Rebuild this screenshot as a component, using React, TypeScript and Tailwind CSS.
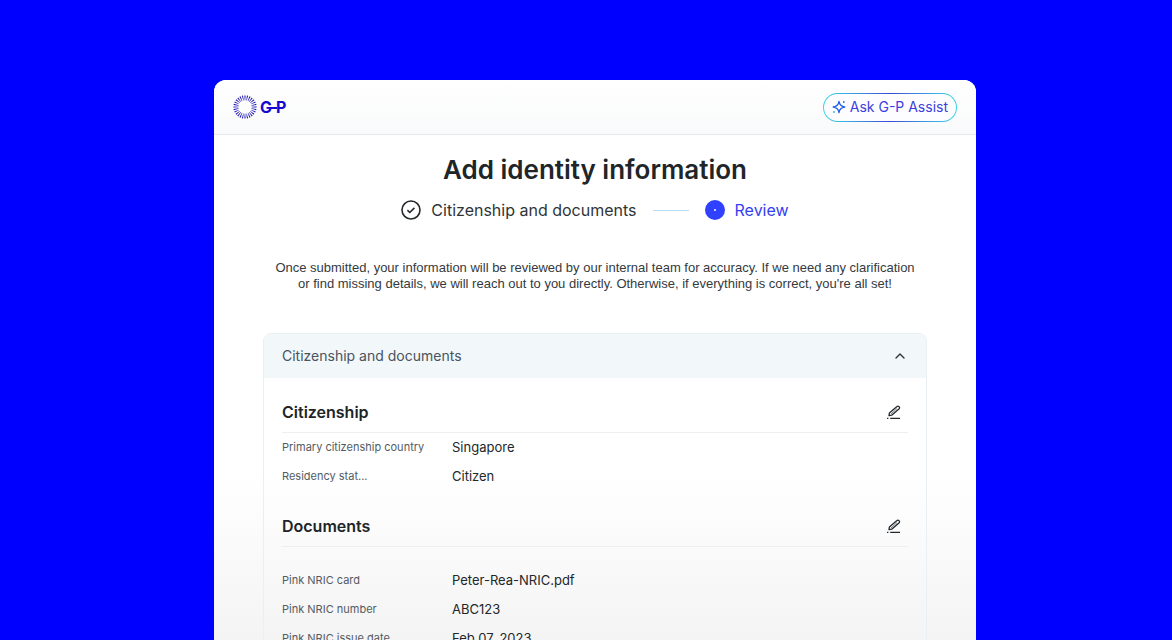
import { useState } from 'react';
import { ChevronUp } from 'lucide-react';

type Field = { label: string; value: string };

const citizenship: Field[] = [
  { label: 'Primary citizenship country', value: 'Singapore' },
  { label: 'Residency stat...', value: 'Citizen' },
];

const documents: Field[] = [
  { label: 'Pink NRIC card', value: 'Peter-Rea-NRIC.pdf' },
  { label: 'Pink NRIC number', value: 'ABC123' },
  { label: 'Pink NRIC issue date', value: 'Feb 07, 2023' },
];

function Logo() {
  return (
    <svg width="54" height="24" viewBox="0 0 54 24" role="img" aria-label="G-P">
      {Array.from({ length: 28 }).map((_, i) => (
        <path
          key={i}
          d="M11.4 .4h1.2l-.4 5h-.4Z"
          fill="#1d12b8"
          transform={`rotate(${i * (360 / 28)} 12 12)`}
        />
      ))}
      <g fill="#1409d0" fontSize="16" fontWeight="700" className="font-['Inter',sans-serif]">
        <text x="27" y="18">
          G
        </text>
        <text x="43" y="18">
          P
        </text>
      </g>
      <path d="M38 13h6" stroke="#1409d0" strokeWidth="2" />
    </svg>
  );
}

function SparkleIcon() {
  return (
    <svg width="14" height="14" viewBox="0 0 14 14" fill="none" aria-hidden="true">
      <path
        d="M7 1.4C7.5 4.9 9.1 6.5 12.8 7 9.1 7.5 7.5 9.1 7 12.6 6.5 9.1 4.9 7.5 1.2 7 4.9 6.5 6.5 4.9 7 1.4Z"
        stroke="#2563eb"
        strokeWidth="1.3"
        strokeLinejoin="round"
      />
      <circle cx="11.8" cy="2" r=".9" fill="#3b5bf0" />
      <circle cx="2" cy="12" r=".9" fill="#22b8e0" />
    </svg>
  );
}

function EditIcon() {
  return (
    <svg
      width="16"
      height="16"
      viewBox="0 0 16 16"
      fill="none"
      stroke="#22282c"
      strokeWidth="1.3"
      strokeLinejoin="round"
      aria-hidden="true"
    >
      <path d="M3 11.6l.4-2.6 7.6-6.5a1.3 1.3 0 0 1 1.8 0l.4.4a1.3 1.3 0 0 1 0 1.8l-7.5 6.5Z" />
      <path d="M5 10l6-5.4" strokeWidth=".6" />
      <path d="M1 14.4h1.4M4.2 14.4h9.8" />
    </svg>
  );
}

function Section({ title, fields, listClass }: { title: string; fields: Field[]; listClass: string }) {
  return (
    <section>
      <div className="flex h-10 items-center justify-between border-b border-[#eceff1] pb-0.5">
        <h2 className="text-base font-semibold text-[#202427]">{title}</h2>
        <button type="button" aria-label={`Edit ${title.toLowerCase()}`} className="mr-1.5">
          <EditIcon />
        </button>
      </div>
      <dl className={listClass}>
        {fields.map((f) => (
          <div key={f.label} className="grid h-[29px] grid-cols-[170px_1fr] items-center">
            <dt className="text-[11px] text-[#535b62]">{f.label}</dt>
            <dd className="text-[13px] text-[#22272a]">{f.value}</dd>
          </div>
        ))}
      </dl>
    </section>
  );
}

export default function App() {
  const [open, setOpen] = useState(true);

  return (
    <div className="h-screen overflow-hidden bg-[#0000ff] pt-20 pl-[18px] font-['Inter','Liberation_Sans',sans-serif]">
      <div className="mx-auto h-full max-w-[762px] overflow-hidden rounded-t-xl bg-linear-to-b from-white from-70% to-[#f4f4f5]">
        <header className="flex h-[55px] items-center justify-between border-b border-[#e6e8ea] bg-linear-to-b from-white to-[#f9fafb] px-[19px]">
          <Logo />
          <button
            type="button"
            className="rounded-full bg-linear-to-r from-[#3fd8e4] via-[#3f45d8] to-[#3fd8e4] p-px"
          >
            <span className="flex h-[27px] items-center gap-1 rounded-full bg-[#fdfdff] px-2 text-sm text-[#3c3fdc]">
              <SparkleIcon />
              Ask G-P Assist
            </span>
          </button>
        </header>

        <main className="px-[49px] pt-[17px]">
          <h1 className="text-center text-[26px] leading-9 font-semibold text-[#202529]">
            Add identity information
          </h1>

          <ol className="mt-[10px] flex items-center justify-center text-base leading-6">
            <li className="flex items-center gap-2.5 text-[#2f3437]">
              <svg width="20" height="20" viewBox="0 0 20 20" fill="none" stroke="#22272a" aria-hidden="true">
                <circle cx="10" cy="10" r="9" strokeWidth="1.6" />
                <path d="M6.4 10.2l2.4 2.3 4.6-4.6" strokeWidth="1.6" />
              </svg>
              Citizenship and documents
            </li>
            <li aria-hidden="true" className="mx-4 h-px w-9 bg-[#b9dcf5]" />
            <li aria-current="step" className="flex items-center gap-2.5 text-[#343ff0]">
              <span className="flex size-5 items-center justify-center rounded-full bg-[#3040ff]">
                <span className="size-0.5 rounded-full bg-white" />
              </span>
              Review
            </li>
          </ol>

          <p className="mt-[38px] text-center font-['Liberation_Sans',sans-serif] text-[13px] leading-4 text-[#343a3e]">
            Once submitted, your information will be reviewed by our internal team for accuracy. If we need any
            clarification <br className="hidden md:inline" />
            or find missing details, we will reach out to you directly. Otherwise, if everything is correct, you're
            all set!
          </p>

          <div className="mt-[41px] rounded-t-lg border border-[#e9eff2]">
            <button
              type="button"
              aria-expanded={open}
              onClick={() => setOpen(!open)}
              className="flex h-11 w-full items-center justify-between rounded-t-lg bg-[#f2f7fa] px-[18px] text-sm text-[#48545e]"
            >
              Citizenship and documents
              <ChevronUp size={16} color="#2b3338" />
            </button>
            {open && (
              <div className="px-[18px] pt-[15px] pb-8">
                <Section title="Citizenship" fields={citizenship} listClass="pb-4" />
                <Section title="Documents" fields={documents} listClass="pt-[19px]" />
              </div>
            )}
          </div>
        </main>
      </div>
    </div>
  );
}
